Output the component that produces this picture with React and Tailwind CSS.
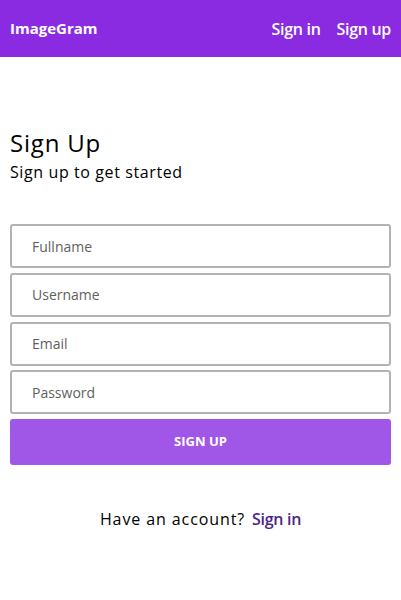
import React from 'react';

const fields = ['Fullname', 'Username', 'Email', 'Password'];

const App = () => {
  return (
    <div className="min-h-screen bg-white" style={{ fontFamily: '"Open Sans", "Liberation Sans", sans-serif' }}>
      <nav className="h-[57px] bg-[#8a2be2] flex items-center justify-between px-[10px] pb-[1px]">
        <span className="text-white text-[15px] font-bold">ImageGram</span>
        <div className="flex items-center gap-4 pt-[2px]">
          <a className="text-white text-[16px] font-semibold tracking-[-0.3px]">Sign in</a>
          <a className="text-white text-[16px] font-semibold tracking-[-0.3px]">Sign up</a>
        </div>
      </nav>

      <div className="px-[10px]">
        <div className="pt-[70px]">
          <h1 className="text-[24px] leading-[32px] text-black tracking-[0.8px]">Sign Up</h1>
          <p className="text-[16px] leading-[24px] mt-[1px] text-black tracking-[0.6px]">Sign up to get started</p>
        </div>

        <form className="mt-[40px] flex flex-col gap-[4.75px]">
          {fields.map((f) => (
            <input
              key={f}
              type={f === 'Password' ? 'password' : 'text'}
              placeholder={f}
              className="h-[44px] w-full border-2 border-[#b3b3b3] rounded-[3px] px-[20px] text-[14px] font-medium placeholder:text-[#5f5f5f]"
            />
          ))}
          <button
            type="button"
            className="h-[46px] w-full bg-[#a056e6] rounded-[3px] text-white text-[13px] font-bold"
          >
            SIGN UP
          </button>
        </form>

        <p className="mt-[42px] text-center text-[16px] text-black">
          <span className="tracking-[0.9px]">Have an account?</span>
          <a className="text-[#4b2587] font-semibold tracking-[-0.3px] ml-[7px]">Sign in</a>
        </p>
      </div>
    </div>
  );
};

export default App;
